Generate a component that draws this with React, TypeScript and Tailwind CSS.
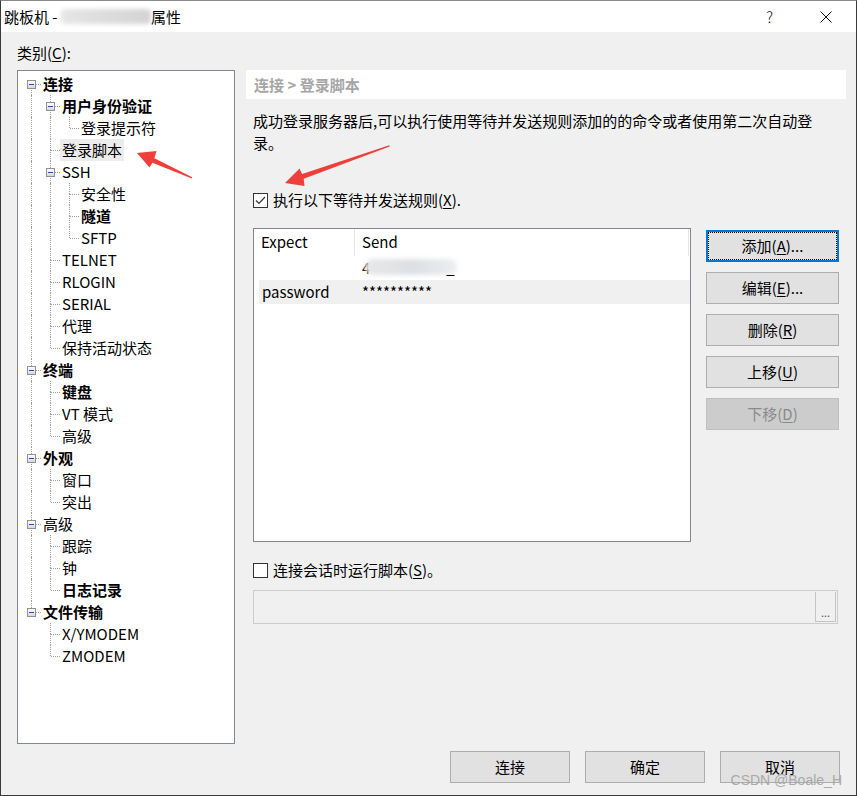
import React from "react";

type TNode = { label: string; bold?: boolean; selected?: boolean; children?: TNode[] };
type TRow = {
  label: string;
  bold?: boolean;
  selected?: boolean;
  level: number;
  hasChildren: boolean;
  hasNext: boolean;
  top: boolean;
  cont: boolean[];
};

const tree: TNode[] = [
  {
    label: "连接",
    bold: true,
    children: [
      { label: "用户身份验证", bold: true, children: [{ label: "登录提示符" }] },
      { label: "登录脚本", selected: true },
      {
        label: "SSH",
        children: [{ label: "安全性" }, { label: "隧道", bold: true }, { label: "SFTP" }],
      },
      { label: "TELNET" },
      { label: "RLOGIN" },
      { label: "SERIAL" },
      { label: "代理" },
      { label: "保持活动状态" },
    ],
  },
  {
    label: "终端",
    bold: true,
    children: [{ label: "键盘", bold: true }, { label: "VT 模式" }, { label: "高级" }],
  },
  { label: "外观", bold: true, children: [{ label: "窗口" }, { label: "突出" }] },
  {
    label: "高级",
    children: [{ label: "跟踪" }, { label: "钟" }, { label: "日志记录", bold: true }],
  },
  { label: "文件传输", bold: true, children: [{ label: "X/YMODEM" }, { label: "ZMODEM" }] },
];

function flatten(nodes: TNode[], level: number, cont: boolean[], out: TRow[]) {
  nodes.forEach((n, i) => {
    const hasNext = i < nodes.length - 1;
    const top = !(level === 0 && i === 0);
    out.push({
      label: n.label,
      bold: n.bold,
      selected: n.selected,
      level,
      hasChildren: !!n.children,
      hasNext,
      top,
      cont: [...cont],
    });
    if (n.children) flatten(n.children, level + 1, [...cont, hasNext], out);
  });
  return out;
}

const rows = flatten(tree, 0, [], []);

function TreeRow({ r }: { r: TRow }) {
  const cells: React.ReactNode[] = [];
  for (let i = 0; i < r.level; i++) {
    cells.push(
      <div key={i} className="relative w-[19px] h-full shrink-0">
        {r.cont[i] && (
          <div className="absolute left-[9px] top-0 bottom-0 border-l border-dotted border-[#a0a0a0]" />
        )}
      </div>
    );
  }
  cells.push(
    <div key="own" className="relative w-[19px] h-full shrink-0">
      {r.top && (
        <div className="absolute left-[9px] top-0 h-[11px] border-l border-dotted border-[#a0a0a0]" />
      )}
      {r.hasNext && (
        <div className="absolute left-[9px] top-[11px] bottom-0 border-l border-dotted border-[#a0a0a0]" />
      )}
      <div className="absolute left-[10px] right-0 top-[11px] border-t border-dotted border-[#a0a0a0]" />
      {r.hasChildren && (
        <div className="absolute left-[5px] top-[7px] w-[9px] h-[9px] border border-[#919191] bg-gradient-to-b from-white to-[#d8d8d8] flex items-center justify-center">
          <div className="w-[5px] h-px bg-[#2050a8]" />
        </div>
      )}
    </div>
  );
  return (
    <div className="flex h-[22px] items-stretch">
      {cells}
      <span
        className={`px-[2px] leading-[22px] whitespace-nowrap ${r.bold ? "font-bold" : ""} ${
          r.selected ? "bg-[#ececec]" : ""
        }`}
      >
        {r.label}
      </span>
    </div>
  );
}

function Btn({
  children,
  focused,
  disabled,
  w,
}: {
  children: React.ReactNode;
  focused?: boolean;
  disabled?: boolean;
  w: string;
}) {
  return (
    <div
      className={`relative h-[32px] ${w} flex items-center justify-center leading-[20px] ${
        disabled
          ? "bg-[#cccccc] border border-[#bfbfbf] text-[#8a8a8a]"
          : focused
          ? "bg-[#e1e1e1] border-2 border-[#0078d7]"
          : "bg-[#e1e1e1] border border-[#adadad]"
      }`}
    >
      {focused && <div className="absolute inset-0 border border-dotted border-black" />}
      <span className="relative">{children}</span>
    </div>
  );
}

function CheckBox({ checked }: { checked?: boolean }) {
  return (
    <div className="w-[15px] h-[15px] border border-[#333333] bg-white shrink-0 flex items-center justify-center">
      {checked && (
        <svg width="13" height="13" viewBox="0 0 13 13">
          <polyline points="2,6.5 5,9.5 11,3" fill="none" stroke="#333" strokeWidth="1.2" />
        </svg>
      )}
    </div>
  );
}

export default function App() {
  return (
    <div className="relative w-[857px] h-[796px] bg-[#f0f0f0] border border-[#3a3a3a] border-t-[#8a8a8a] flex flex-col text-[15px] text-black font-['Noto_Sans_CJK_SC',sans-serif] overflow-hidden">
      {/* Title bar */}
      <div className="h-[31px] bg-white flex items-center shrink-0">
        <div className="pl-[3px] flex items-center leading-[20px] whitespace-nowrap">
          <span>跳板机 -&nbsp;</span>
          <span className="w-[90px] h-[15px] bg-gradient-to-r from-[#e6e6e6] via-[#dcdcdc] to-[#d4d4d4] blur-[2px] rounded" />
          <span>属性</span>
        </div>
        <span className="ml-auto leading-[20px] font-light">?</span>
        <svg className="ml-[47px] mr-[24px]" width="12" height="12" viewBox="0 0 12 12">
          <path d="M0.5 0.5 L11.5 11.5 M11.5 0.5 L0.5 11.5" stroke="#111" strokeWidth="1" />
        </svg>
      </div>

      {/* Body */}
      <div className="flex-1 flex flex-col pl-[16px] pr-[10px]">
        <div className="mt-[11px] h-[20px] leading-[20px]">
          类别(<span className="underline underline-offset-2">C</span>):
        </div>

        <div className="mt-[7px] flex h-[674px]">
          {/* Tree */}
          <div className="w-[218px] h-full shrink-0 border border-[#828790] bg-white pt-[2px] pl-[4px]">
            {rows.map((r, i) => (
              <TreeRow key={i} r={r} />
            ))}
          </div>

          {/* Right panel */}
          <div className="ml-[11px] w-[600px] shrink-0 flex flex-col">
            <div className="h-[29px] bg-white flex items-center pl-[8px] text-[#a6a6a6] font-bold leading-[20px]">
              连接 &gt; 登录脚本
            </div>
            <div className="px-[7px] flex flex-col">
              <div className="mt-[11px] leading-[22px]">
                成功登录服务器后,可以执行使用等待并发送规则添加的的命令或者使用第二次自动登
                <br />
                录。
              </div>

              <div className="mt-[36px] h-[20px] flex items-center">
                <CheckBox checked />
                <span className="ml-[5px] leading-[20px]">
                  执行以下等待并发送规则(<span className="underline underline-offset-2">X</span>).
                </span>
              </div>

              <div className="mt-[18px] flex">
                <div className="w-[438px] h-[314px] border border-[#828790] bg-white shrink-0 flex flex-col">
                  <div className="h-[27px] flex">
                    <div className="w-[101px] h-full border-r border-[#e5e5e5] pl-[7px] flex items-center">
                      Expect
                    </div>
                    <div className="w-[334px] h-full border-r border-[#e5e5e5] pl-[7px] flex items-center">
                      Send
                    </div>
                  </div>
                  <div className="ml-[5px] h-[24px] flex items-center">
                    <div className="w-[96px] pl-[3px]" />
                    <div className="pl-[7px] relative flex items-center">
                      <span>4</span>
                      <span className="absolute left-[10px] top-[2px] w-[92px] h-[16px] rounded-full bg-gradient-to-r from-[#e8e8e8] via-[#dde0e3] to-[#eceef0] blur-[2px]" />
                      <span className="ml-[76px] relative">_</span>
                    </div>
                  </div>
                  <div className="ml-[5px] h-[24px] flex items-center bg-[#f0f0f0]">
                    <div className="w-[96px] pl-[3px]">password</div>
                    <div className="pl-[7px]">**********</div>
                  </div>
                </div>

                <div className="ml-[15px] w-[133px] pt-[2px] flex flex-col gap-[10px] shrink-0">
                  <Btn w="w-[133px]" focused>
                    添加(<span className="underline underline-offset-2">A</span>)...
                  </Btn>
                  <Btn w="w-[133px]">
                    编辑(<span className="underline underline-offset-2">E</span>)...
                  </Btn>
                  <Btn w="w-[133px]">
                    删除(<span className="underline underline-offset-2">R</span>)
                  </Btn>
                  <Btn w="w-[133px]">
                    上移(<span className="underline underline-offset-2">U</span>)
                  </Btn>
                  <Btn w="w-[133px]" disabled>
                    下移(<span className="underline underline-offset-2">D</span>)
                  </Btn>
                </div>
              </div>

              <div className="mt-[18px] h-[20px] flex items-center">
                <CheckBox />
                <span className="ml-[5px] leading-[20px]">
                  连接会话时运行脚本(<span className="underline underline-offset-2">S</span>)。
                </span>
              </div>

              <div className="mt-[10px] w-[585px] h-[34px] border border-[#cccccc] bg-[#f0f0f0] flex justify-end items-stretch py-px pr-px">
                <div className="w-[21px] border-l border-b border-r border-[#c4c4c4] bg-[#f0f0f0] flex items-end justify-center text-[11px] leading-[14px] text-[#555] pb-[2px]">
                  ...
                </div>
              </div>
            </div>
          </div>
        </div>

        <div className="mt-[7px] flex justify-end gap-[15px] pr-[6px]">
          <Btn w="w-[120px]">连接</Btn>
          <Btn w="w-[120px]">确定</Btn>
          <Btn w="w-[120px]">取消</Btn>
        </div>
      </div>

      {/* Watermark */}
      <span className="absolute right-[14px] bottom-[6px] text-[14px] leading-[18px] text-[#a9a9a9] font-['Liberation_Sans',sans-serif] pointer-events-none">
        CSDN @Boale_H
      </span>

      {/* Annotation arrows */}
      <svg
        className="absolute left-[-1px] top-[-1px] pointer-events-none"
        width="857"
        height="796"
        viewBox="0 0 857 796"
      >
        <polygon
          points="137,153 156.5,151 154.4,158.2 192.2,177.3 191.8,178.5 152.4,162.8 149.5,167.5"
          fill="#ee3f3a"
        />
        <polygon
          points="285,183 299.5,168.5 302.1,174.0 389.3,145.3 389.7,146.6 303.7,178.8 304.5,186"
          fill="#ee3f3a"
        />
      </svg>
    </div>
  );
}
